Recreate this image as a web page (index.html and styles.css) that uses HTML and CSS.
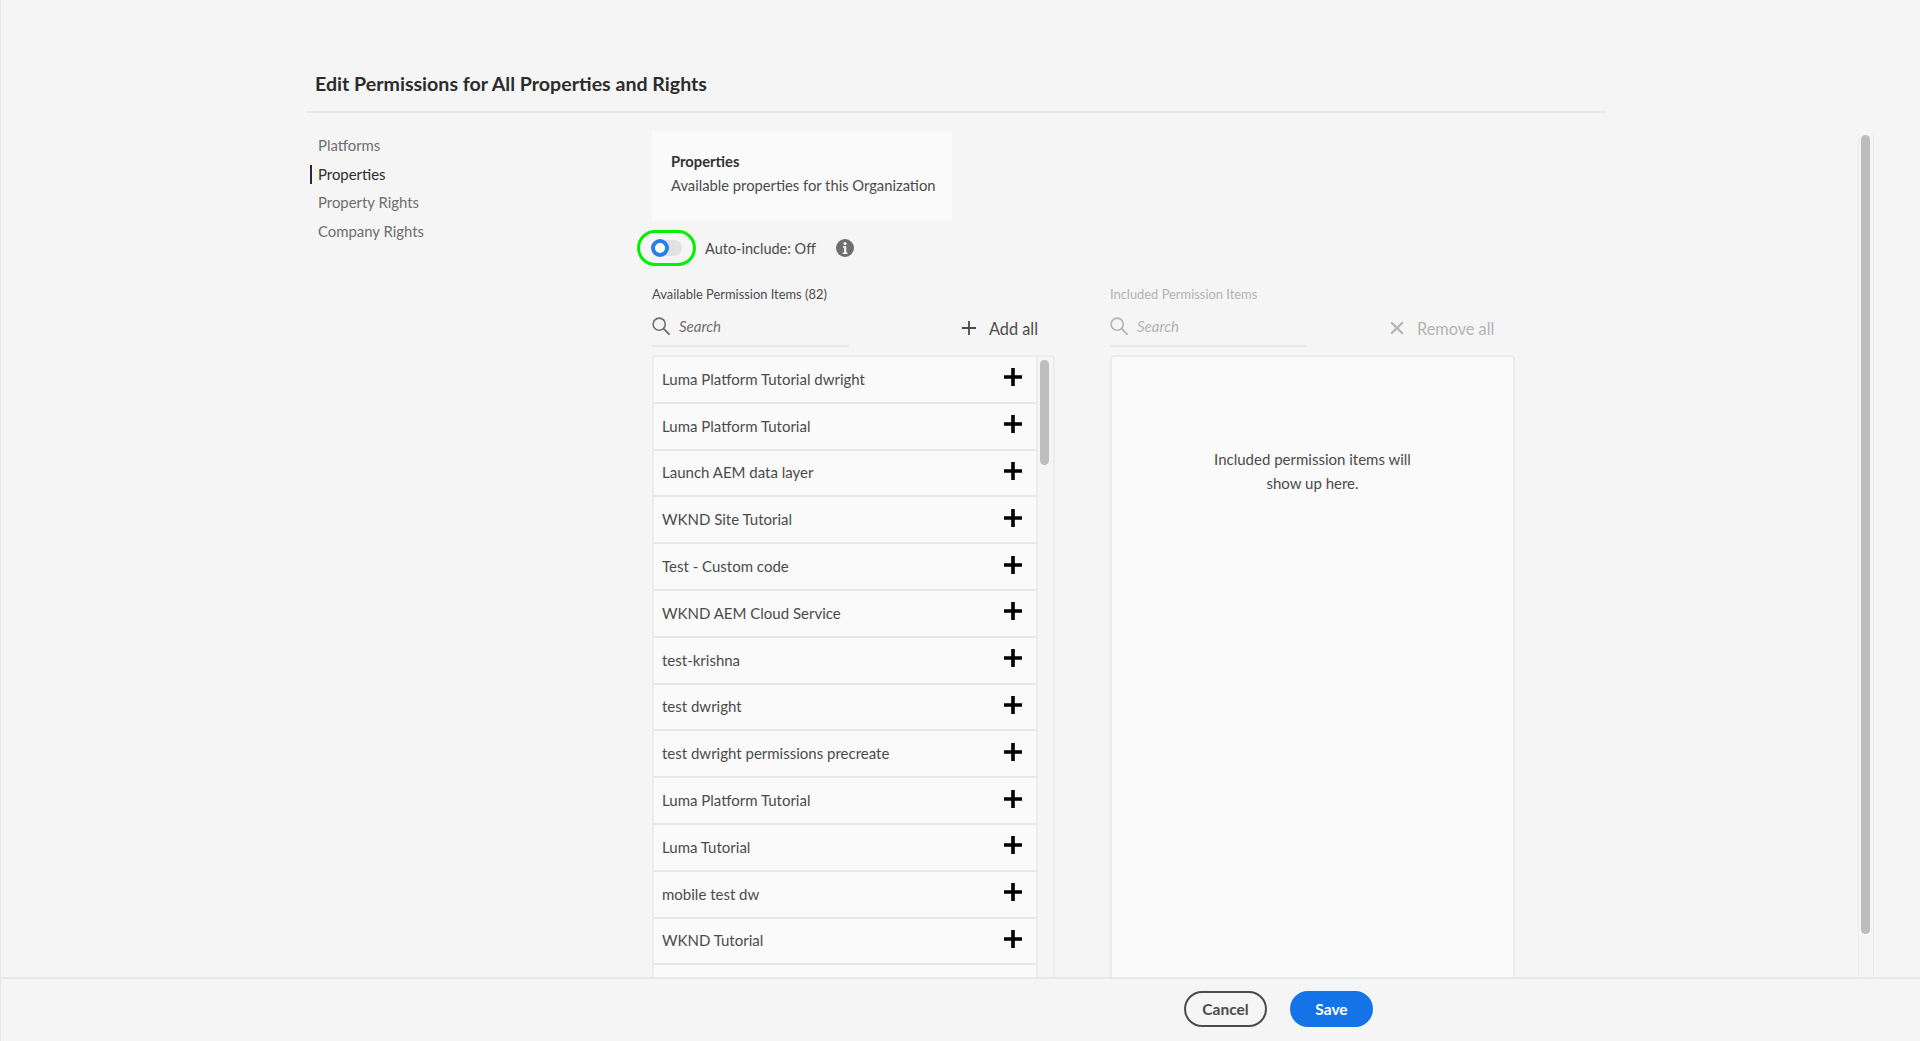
FILE: index.html
```html
<!DOCTYPE html>
<html lang="en">
<head>
    <meta charset="UTF-8">
    <title>Edit Permissions</title>
    <link rel="stylesheet" href="styles.css">
</head>
<body>
    <svg class="defs" width="0" height="0">
        <symbol id="plus" viewBox="0 0 18 18"><path d="M7.2 0h3.6v7.2H18v3.6h-7.2V18H7.2v-7.2H0V7.2h7.2z"/></symbol>
        <symbol id="search" viewBox="0 0 18 18"><circle cx="7.2" cy="7.2" r="6.1" fill="none" stroke="currentColor" stroke-width="1.6"/><path d="M11.6 11.6l5.4 5.6" fill="none" stroke="currentColor" stroke-width="1.8" stroke-linecap="round"/></symbol>
    </svg>
    <div class="page">
        <h1 class="page-title">Edit Permissions for All Properties and Rights</h1>
        <div class="page-body">
            <nav class="side-nav">
                <a>Platforms</a>
                <a class="active">Properties</a>
                <a>Property Rights</a>
                <a>Company Rights</a>
            </nav>
            <div class="content">
                <div class="intro-card">
                    <strong>Properties</strong>
                    <span>Available properties for this Organization</span>
                </div>
                <div class="auto-row">
                    <div class="toggle-ring">
                        <div class="toggle"><span class="knob"></span></div>
                    </div>
                    <span class="auto-label">Auto-include: Off</span>
                    <svg class="info" viewBox="0 0 18 18"><circle cx="9" cy="9" r="9" fill="#6e6e6e"/><circle cx="9" cy="4.6" r="1.6" fill="#f5f5f5"/><path d="M6.9 7.3h3.4v6.2h1.2v1.4H6.7v-1.4h1.4V8.7H6.9z" fill="#f5f5f5"/></svg>
                </div>
                <div class="columns">
                    <section class="column">
                        <div class="col-label">Available Permission Items (82)</div>
                        <div class="col-tools">
                            <div class="search"><svg class="search-icon"><use href="#search"/></svg><span>Search</span></div>
                            <div class="bulk add-all"><svg viewBox="0 0 14 14"><path d="M6.1 0h1.8v6.1H14v1.8H7.9V14H6.1V7.9H0V6.1h6.1z"/></svg><span>Add all</span></div>
                        </div>
                        <div class="list-box">
                            <ul class="items">
                                <li>Luma Platform Tutorial dwright<svg class="add"><use href="#plus"/></svg></li>
                                <li>Luma Platform Tutorial<svg class="add"><use href="#plus"/></svg></li>
                                <li>Launch AEM data layer<svg class="add"><use href="#plus"/></svg></li>
                                <li>WKND Site Tutorial<svg class="add"><use href="#plus"/></svg></li>
                                <li>Test - Custom code<svg class="add"><use href="#plus"/></svg></li>
                                <li>WKND AEM Cloud Service<svg class="add"><use href="#plus"/></svg></li>
                                <li>test-krishna<svg class="add"><use href="#plus"/></svg></li>
                                <li>test dwright<svg class="add"><use href="#plus"/></svg></li>
                                <li>test dwright permissions precreate<svg class="add"><use href="#plus"/></svg></li>
                                <li>Luma Platform Tutorial<svg class="add"><use href="#plus"/></svg></li>
                                <li>Luma Tutorial<svg class="add"><use href="#plus"/></svg></li>
                                <li>mobile test dw<svg class="add"><use href="#plus"/></svg></li>
                                <li>WKND Tutorial<svg class="add"><use href="#plus"/></svg></li>
                                <li></li>
                            </ul>
                            <div class="list-scroll"><span class="list-thumb"></span></div>
                        </div>
                    </section>
                    <section class="column included">
                        <div class="col-label">Included Permission Items</div>
                        <div class="col-tools">
                            <div class="search"><svg class="search-icon"><use href="#search"/></svg><span>Search</span></div>
                            <div class="bulk remove-all"><svg viewBox="0 0 14 14"><path d="M1.2 1.2l11.6 11.6M12.8 1.2L1.2 12.8" fill="none" stroke="currentColor" stroke-width="2.2"/></svg><span>Remove all</span></div>
                        </div>
                        <div class="empty-box">Included permission items will<br>show up here.</div>
                    </section>
                </div>
            </div>
            <div class="page-scroll"><span class="page-thumb"></span></div>
        </div>
    </div>
    <footer class="footer">
        <button class="btn btn-cancel" type="button">Cancel</button>
        <button class="btn btn-save" type="button">Save</button>
    </footer>
</body>
</html>
```

FILE: styles.css
```css
* {
    box-sizing: border-box;
}
html, body {
    height: 100%;
}
body {
    margin: 0;
    display: flex;
    flex-direction: column;
    overflow: hidden;
    background-color: #f5f5f5;
    color: #4b4b4b;
    font-family: 'Lato', 'Liberation Sans', sans-serif;
    border-left: 1px solid #e8e8e8;
}
.defs {
    display: none;
}
.page {
    flex: 1;
    min-height: 0;
    overflow: hidden;
    display: flex;
    flex-direction: column;
}
.page-title {
    flex: none;
    height: 113px;
    margin: 0 313px 0 306px;
    padding: 71px 0 0 8px;
    border-bottom: 2px solid #e8e8e8;
    color: #2c2c2c;
    font-size: 19.6px;
    line-height: 26px;
    font-weight: 700;
}
.page-body {
    flex: 1;
    min-height: 0;
    display: flex;
    padding-left: 308px;
}
/* left nav */
.side-nav {
    flex: none;
    width: 343px;
    padding-top: 18px;
    display: flex;
    flex-direction: column;
}
.side-nav a {
    height: 28.7px;
    line-height: 28px;
    padding-left: 9px;
    font-size: 14.9px;
    color: #6e6e6e;
    position: relative;
}
.side-nav a.active {
    color: #2c2c2c;
}
.side-nav a.active::before {
    content: "";
    position: absolute;
    left: 1px;
    top: 5px;
    width: 2px;
    height: 19px;
    background: #2c2c2c;
}
/* main column */
.content {
    flex: none;
    width: 863px;
    padding-top: 18px;
}
.intro-card {
    width: 300px;
    height: 90px;
    padding: 21px 0 0 19px;
    background: #fafafa;
    display: flex;
    flex-direction: column;
    gap: 5px;
    font-size: 14.75px;
    line-height: 19px;
}
.intro-card strong {
    color: #323232;
}
.auto-row {
    display: flex;
    align-items: center;
    height: 36px;
    margin: 9px 0 0 -15px;
}
.toggle-ring {
    width: 59px;
    height: 36px;
    border: 3px solid #00f000;
    border-radius: 18px;
    padding: 7px 0 0 11px;
}
.toggle {
    position: relative;
    width: 31px;
    height: 16px;
    border-radius: 8px;
    background: #e1e1e1;
}
.knob {
    position: absolute;
    left: 0;
    top: -1px;
    width: 18px;
    height: 18px;
    border-radius: 50%;
    background: #fff;
    border: 4px solid #2680eb;
}
.auto-label {
    margin-left: 9px;
    font-size: 14.5px;
    width: 131px;
}
.info {
    width: 18px;
    height: 18px;
}
.columns {
    display: flex;
    gap: 55px;
    margin-top: 19px;
}
.column {
    width: 403px;
}
.column.included {
    width: 405px;
    color: #b3b3b3;
}
.col-label {
    font-size: 12.9px;
    line-height: 18px;
}
.col-tools {
    display: flex;
    align-items: flex-start;
    height: 45px;
    margin-top: 5px;
}
.search {
    width: 197px;
    height: 39px;
    padding-bottom: 2px;
    display: flex;
    align-items: center;
    border-bottom: 2px solid #e8e8e8;
    color: #6e6e6e;
    font-size: 15px;
    font-style: italic;
}
.included .search {
    color: #b3b3b3;
}
.search-icon {
    width: 18px;
    height: 18px;
    margin-right: 9px;
}
.bulk {
    display: flex;
    align-items: center;
    height: 34px;
    margin-top: 3px;
    font-size: 16.3px;
}
.bulk svg {
    width: 14px;
    height: 14px;
    margin-right: 13px;
    fill: currentColor;
}
.add-all {
    margin-left: 113px;
}
.remove-all {
    margin-left: 83px;
}
/* lists */
.list-box {
    position: relative;
    height: 640px;
    display: flex;
    margin-top: 2px;
    border: 2px solid #ececec;
    border-bottom: 0;
    border-radius: 4px 4px 0 0;
    overflow: hidden;
}
.items {
    flex: 1;
    margin: 0;
    padding: 0;
    list-style: none;
}
.items li {
    height: 46.8px;
    display: flex;
    align-items: center;
    justify-content: space-between;
    padding: 0 14px 1px 8px;
    background: #fafafa;
    border-bottom: 2px solid #e8e8e8;
    font-size: 15px;
    color: #4b4b4b;
}
.add {
    width: 18px;
    height: 18px;
    fill: #000;
    margin-bottom: 3px;
}
.list-scroll {
    flex: none;
    width: 17px;
    background: #f5f5f5;
    border-left: 2px solid #ececec;
}
.list-thumb {
    display: block;
    width: 9px;
    height: 105px;
    margin: 3px 0 0 2px;
    border-radius: 5px;
    background: #bdbdbd;
}
.empty-box {
    height: 640px;
    margin-top: 2px;
    padding-top: 90px;
    background: #fafafa;
    border: 2px solid #ececec;
    border-bottom: 0;
    border-radius: 4px 4px 0 0;
    color: #4b4b4b;
    text-align: center;
    font-size: 15px;
    line-height: 24px;
}
/* window scrollbar */
.page-scroll {
    flex: none;
    width: 16px;
    margin: 19px 46px 0 auto;
    border: 1px solid #ececec;
    border-bottom: 0;
    border-top-color: #f8f8f8;
}
.page-thumb {
    display: block;
    width: 9px;
    height: 799px;
    margin: 2px 0 0 2px;
    border-radius: 5px;
    background: #bdbdbd;
}
.footer {
    flex: none;
    height: 64px;
    padding: 12px 0 0 1183px;
    display: flex;
    gap: 23px;
    align-items: flex-start;
    border-top: 2px solid #e8e8e8;
    background: #f5f5f5;
}
.btn {
    width: 83px;
    height: 36px;
    padding: 0;
    border-radius: 18px;
    font-family: inherit;
    font-size: 15.5px;
    font-weight: 700;
}
.btn-cancel {
    background: transparent;
    border: 2px solid #4b4b4b;
    color: #4b4b4b;
}
.btn-save {
    background: #1473e6;
    border: 2px solid #1473e6;
    color: #fff;
}
```
